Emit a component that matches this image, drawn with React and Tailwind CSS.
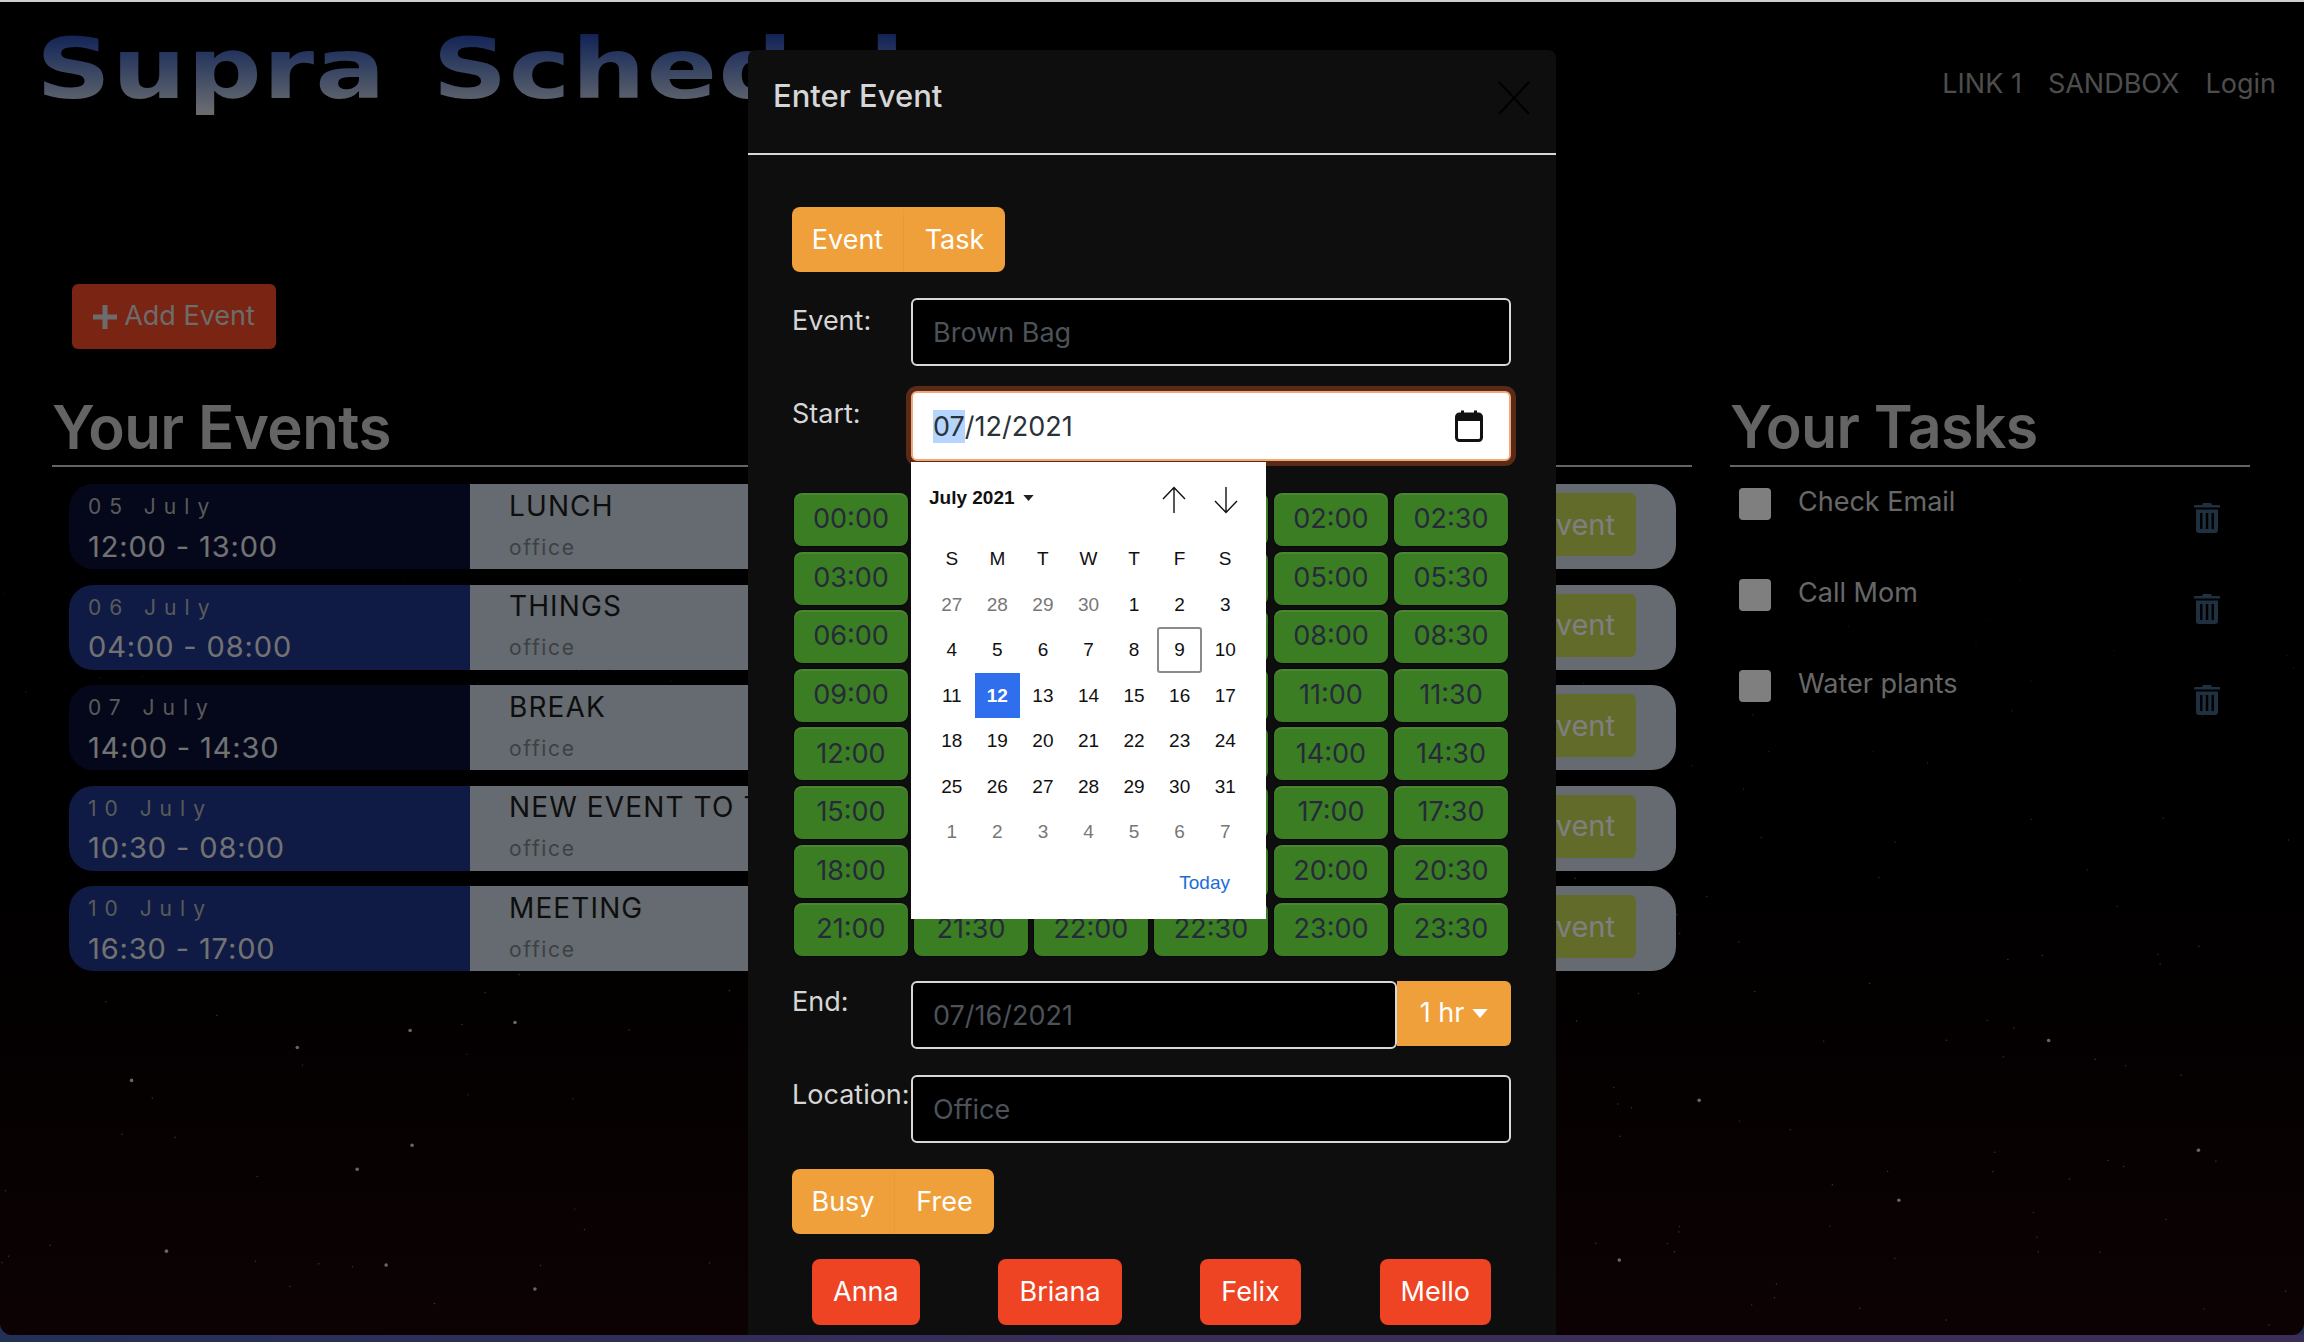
import React from 'react';

const events = [
  { date: '05 July', time: '12:00 - 13:00', name: 'LUNCH', dark: true },
  { date: '06 July', time: '04:00 - 08:00', name: 'THINGS' },
  { date: '07 July', time: '14:00 - 14:30', name: 'BREAK', dark: true },
  { date: '10 July', time: '10:30 - 08:00', name: 'NEW EVENT TO TEST' },
  { date: '10 July', time: '16:30 - 17:00', name: 'MEETING' },
];

const tasks = ['Check Email', 'Call Mom', 'Water plants'];

// the picker shows 8 rows of 6 half hour slots, a row covers 3 hours
const slots = [];
for (let row = 0; row < 8; row++) {
  for (let col = 0; col < 6; col++) {
    const h = row * 3 + Math.floor(col / 2);
    slots.push(`${String(h).padStart(2, '0')}:${col % 2 ? '30' : '00'}`);
  }
}

const weeks = [
  [27, 28, 29, 30, 1, 2, 3],
  [4, 5, 6, 7, 8, 9, 10],
  [11, 12, 13, 14, 15, 16, 17],
  [18, 19, 20, 21, 22, 23, 24],
  [25, 26, 27, 28, 29, 30, 31],
  [1, 2, 3, 4, 5, 6, 7],
];

// brightest stars read off the picture, the rest are scattered from a fixed seed
const bigStars = [
  [296, 1047], [130, 1080], [409, 1030], [411, 1145], [356, 1169], [165, 1251], [385, 1265],
  [534, 1289], [514, 1022], [1700, 1100], [1900, 1200], [2050, 1040], [1620, 1260], [2200, 1150],
];
const smallStars = [];
let seed = 7;
const rand = () => {
  seed = (seed * 16807) % 2147483647;
  return seed / 2147483647;
};
for (let i = 0; i < 260; i++) {
  smallStars.push([rand() * 2304, 480 + rand() * 850]);
}

const Starfield = () => (
  <svg className="absolute inset-0 h-full w-full" viewBox="0 0 2304 1335">
    {smallStars.map(([x, y], i) => (
      <circle key={i} cx={x} cy={y} r="0.7" fill="#ffffff" opacity={Math.min(0.45, (y - 480) / 900)} />
    ))}
    {bigStars.map(([x, y], i) => (
      <circle key={i} cx={x} cy={y} r="1.8" fill="#ffffff" opacity="0.8" />
    ))}
  </svg>
);

const TrashIcon = () => (
  <svg width="26" height="30" viewBox="0 0 26 30" fill="#3e6080">
    <path d="M9 0h8l1 2h7a1 1 0 0 1 1 1v1.500H0V3a1 1 0 0 1 1-1h7z" />
    <path fillRule="evenodd" d="M2 6.500h22V27a3 3 0 0 1-3 3H5a3 3 0 0 1-3-3zM6 10v16h2.500V10zm5.800 0v16h2.500V10zm5.700 0v16H20V10z" />
  </svg>
);

const CalendarIcon = () => (
  <svg width="28" height="32" viewBox="0 0 28 32" fill="none">
    <rect x="1.500" y="4" width="25" height="26.500" rx="3" stroke="#111" strokeWidth="3" />
    <rect x="1.500" y="4" width="25" height="7" fill="#111" />
    <rect x="6" y="0.500" width="3" height="5" fill="#111" />
    <rect x="19" y="0.500" width="3" height="5" fill="#111" />
  </svg>
);

const Caret = ({ color, w = 12, h = 7 }) => (
  <svg width={w} height={h} viewBox="0 0 12 7">
    <path d="M0 0h12L6 7z" fill={color} />
  </svg>
);

const Arrow = ({ down }) => (
  <svg width="26" height="28" viewBox="0 0 26 28" fill="none" stroke="#111" strokeWidth="1.400" className={down ? 'rotate-180' : ''}>
    <path d="M13 27V1.500M2 13L13 1.500 24 13" />
  </svg>
);

const Calendar = () => (
  <div className="absolute -left-[2px] top-[69px] z-10 h-[457px] w-[355px] bg-white pl-[18px] font-['Liberation_Sans',sans-serif] text-[#111]">
    <div className="flex h-[74px] items-center pb-[2px]">
      <span className="text-[19px] font-bold">July 2021</span>
      <span className="ml-[8px]">
        <Caret color="#222" w={11} h={6} />
      </span>
      <span className="ml-[127px] flex gap-[26px] pt-[4px]">
        <Arrow />
        <Arrow down />
      </span>
    </div>
    <div className="grid w-[319px] grid-cols-7 text-center text-[19px] leading-[45.500px]">
      {['S', 'M', 'T', 'W', 'T', 'F', 'S'].map((d, i) => (
        <div key={i} className="h-[45.500px]">{d}</div>
      ))}
      {weeks.map((week, w) =>
        week.map((d, i) => {
          const muted = (w === 0 && i < 4) || w === 5;
          const selected = w === 2 && d === 12;
          const today = w === 1 && d === 9;
          return (
            <div
              key={`${w}-${i}`}
              className={`h-[45.500px] ${muted ? 'text-[#777]' : ''} ${selected ? 'bg-[#2f6fed] font-bold text-white' : ''} ${today ? 'rounded-[3px] border-2 border-[#8a8a8a] leading-[41.500px]' : ''}`}
            >
              {d}
            </div>
          );
        })
      )}
    </div>
    <div className="mt-[14px] w-[319px] pr-[18px] text-right text-[19px] text-[#1a6ed8]">Today</div>
  </div>
);

const OrangeToggle = ({ labels, widths }) => (
  <div className="flex h-[65px] w-fit overflow-hidden rounded-lg bg-[#f0a03a] pt-[2px] text-[27px] text-white">
    {labels.map((l, i) => (
      <div key={l} className={`flex items-center justify-center ${widths[i]} ${i === 0 ? 'border-r border-[#e89a38]' : ''}`}>
        {l}
      </div>
    ))}
  </div>
);

const Modal = () => (
  <div className="absolute left-[748px] top-[48px] flex h-[1285px] w-[808px] flex-col rounded-t-lg bg-[#0e0e0e]">
    <div className="flex h-[105px] shrink-0 items-start justify-between border-b-2 border-[#d8d8d8] pl-[25px] pr-[25px] pt-[23px]">
      <h5 className="text-[31px] font-medium text-[#d6d6d6]">Enter Event</h5>
      <svg width="34" height="36" viewBox="0 0 34 36" stroke="#000" strokeWidth="2" className="mt-[7px]">
        <path d="M2 2l30 32M32 2L2 34" />
      </svg>
    </div>
    <div className="flex flex-col pl-[44px] pr-[45px] pt-[52px]">
      <OrangeToggle labels={['Event', 'Task']} widths={['w-[112px]', 'w-[101px]']} />

      <div className="mt-[26px] flex">
        <label className="w-[119px] pt-[3px] text-[27px] text-[#d6d6d6]">Event:</label>
        <input readOnly placeholder="Brown Bag" className="h-[68px] flex-1 rounded-md border-2 border-[#d8d8d8] bg-black px-[20px] text-[27px] placeholder:text-[#4c5258]" />
      </div>

      <div className="mt-[25px] flex">
        <label className="w-[119px] pt-[3px] text-[27px] text-[#d6d6d6]">Start:</label>
        <div className="relative flex h-[70px] flex-1 items-center justify-between rounded-md border-2 border-[#f3a878] bg-white pl-[20px] pr-[26px] text-[27px] text-[#2b3138] shadow-[0_0_0_5px_#5a2a17]">
          <span className="pt-[2px]">
            <span className="bg-[#b5d5ff]">07</span>/12/2021
          </span>
          <CalendarIcon />
          <Calendar />
        </div>
      </div>

      <div className="ml-[2px] mt-[32px] grid w-[714px] grid-cols-6 gap-x-[6px] gap-y-[5.600px]">
        {slots.map((t) => (
          <button key={t} className="flex h-[53px] items-center justify-center rounded-lg bg-[#3a7d22] text-[27px] text-[#262a3a] shadow-[inset_0_2px_0_rgba(255,255,255,0.08),0_0_0_1px_rgba(0,0,0,0.4)]">
            {t}
          </button>
        ))}
      </div>

      <div className="mt-[25px] flex">
        <label className="w-[119px] pt-[1px] text-[27px] text-[#d6d6d6]">End:</label>
        <input readOnly placeholder="07/16/2021" className="h-[68px] flex-1 rounded-md border-2 border-[#d8d8d8] bg-black px-[20px] text-[27px] placeholder:text-[#4c5258]" />
        <button className="flex h-[65px] w-[114px] items-center justify-center gap-[8px] rounded-r-md bg-[#f0a03a] text-[27px] text-white">
          1 hr
          <Caret color="#fff" w={16} h={9} />
        </button>
      </div>

      <div className="mt-[26px] flex">
        <label className="w-[119px] text-[27px] text-[#d6d6d6]">Location:</label>
        <input readOnly placeholder="Office" className="h-[68px] flex-1 rounded-md border-2 border-[#d8d8d8] bg-black px-[20px] text-[27px] placeholder:text-[#4c5258]" />
      </div>

      <div className="mt-[26px]">
        <OrangeToggle labels={['Busy', 'Free']} widths={['w-[103px]', 'w-[99px]']} />
      </div>

      <div className="mt-[25px] flex justify-between px-[20px]">
        {['Anna', 'Briana', 'Felix', 'Mello'].map((n) => (
          <button key={n} className="h-[66px] rounded-lg bg-[#ee4423] px-[21px] text-[27px] text-white">
            {n}
          </button>
        ))}
      </div>
    </div>
  </div>
);

const EventRow = ({ date, time, name, dark }) => (
  <div className="flex h-[85px] overflow-hidden rounded-[24px]">
    <div className={`flex w-[401px] shrink-0 flex-col pl-[19px] pt-[7px] ${dark ? 'bg-[#0a1034]' : 'bg-[#1e348a]'}`}>
      <span className="text-[21px] tracking-[0.38em] text-[#b4b4b4]">{date}</span>
      <span className="mt-[2px] text-[29px] tracking-[0.03em] text-[#e4e4e4]">{time}</span>
    </div>
    <div className="flex flex-1 items-center justify-between bg-[#cad6e0] pl-[39px] pr-[40px]">
      <div className="-mt-[5px] flex flex-col whitespace-nowrap">
        <span className="text-[28px] leading-[36px] tracking-[0.04em] text-[#1c1c1c]">{name}</span>
        <span className="mt-[11px] text-[21px] leading-[26px] tracking-[0.08em] text-[#7a8288]">office</span>
      </div>
      <button className="mb-[4px] flex h-[63px] w-[150px] items-center justify-end rounded-md bg-[#c6d654] pr-[21px] text-[29px] text-white">
        Event
      </button>
    </div>
  </div>
);

const App = () => (
  <div className="flex h-[1342px] w-full flex-col overflow-hidden bg-[#233056] font-['Inter',sans-serif]">
    <div className="h-[2px] shrink-0 bg-[#cfcfcf]" />
    <div className="relative h-[1333px] shrink-0 overflow-hidden rounded-b-xl bg-linear-to-b from-black from-40% to-[#1a0507]">
      <Starfield />
      <div className="relative flex flex-col">
        <header className="flex h-[282px] items-start justify-between pr-[28px]">
          <h1 className="ml-[36px] mt-[10px] origin-left scale-x-[1.24] whitespace-nowrap bg-linear-to-b from-[#1d3aa8] from-15% to-[#d0d4dc] to-85% bg-clip-text font-['DejaVu_Sans',sans-serif] text-[84px] font-bold leading-[115px] tracking-[0.01em] text-transparent [word-spacing:7px]">
            Supra Schedule
          </h1>
          <nav className="mt-[62px] flex gap-[26px] text-[27px] leading-[40px] text-[#9a9a9a]">
            <a>LINK 1</a>
            <a>SANDBOX</a>
            <a>Login</a>
          </nav>
        </header>

        <div className="pl-[72px]">
          <button className="flex h-[65px] w-[204px] items-center justify-center gap-[7px] rounded-md bg-[#f44826] text-[27px] text-[#d8d8d8]">
            <svg width="24" height="24" viewBox="0 0 24 24" fill="#d8d8d8">
              <path d="M9.500 0h5v9.500H24v5h-9.500V24h-5v-9.500H0v-5h9.500z" />
            </svg>
            Add Event
          </button>
        </div>

        <div className="mt-[33px] flex gap-[38px] pl-[52px]">
          <section className="w-[1640px]">
            <h2 className="flex h-[85px] items-end border-b-2 border-[#c8c8c8] text-[60px] font-semibold leading-[76px] tracking-[-0.01em] text-[#c8c8c8]">
              Your Events
            </h2>
            <div className="mt-[17px] flex flex-col gap-[15.500px] pl-[17px] pr-[16px]">
              {events.map((ev, i) => (
                <EventRow key={i} {...ev} />
              ))}
            </div>
          </section>
          <section className="w-[520px]">
            <h2 className="flex h-[85px] items-end border-b-2 border-[#c8c8c8] text-[59px] font-semibold leading-[76px] tracking-[-0.01em] text-[#c8c8c8]">
              Your Tasks
            </h2>
            <div className="mt-[21px] flex flex-col gap-[28px] pl-[9px] pr-[30px]">
              {tasks.map((t) => (
                <div key={t} className="flex h-[63px] items-start">
                  <span className="h-[32px] w-[32px] shrink-0 rounded bg-white" />
                  <span className="ml-[27px] flex-1 text-[27px] leading-[27px] text-[#cfcfcf]">{t}</span>
                  <span className="mt-[15px]">
                    <TrashIcon />
                  </span>
                </div>
              ))}
            </div>
          </section>
        </div>
      </div>

      {/* modal backdrop dims everything behind the dialog */}
      <div className="absolute inset-0 bg-black/50" />
      <Modal />
    </div>
    <div className="h-[7px] shrink-0 bg-linear-to-r from-[#233056] via-[#3a2d58] to-[#3a2d58]" />
  </div>
);

export default App;
